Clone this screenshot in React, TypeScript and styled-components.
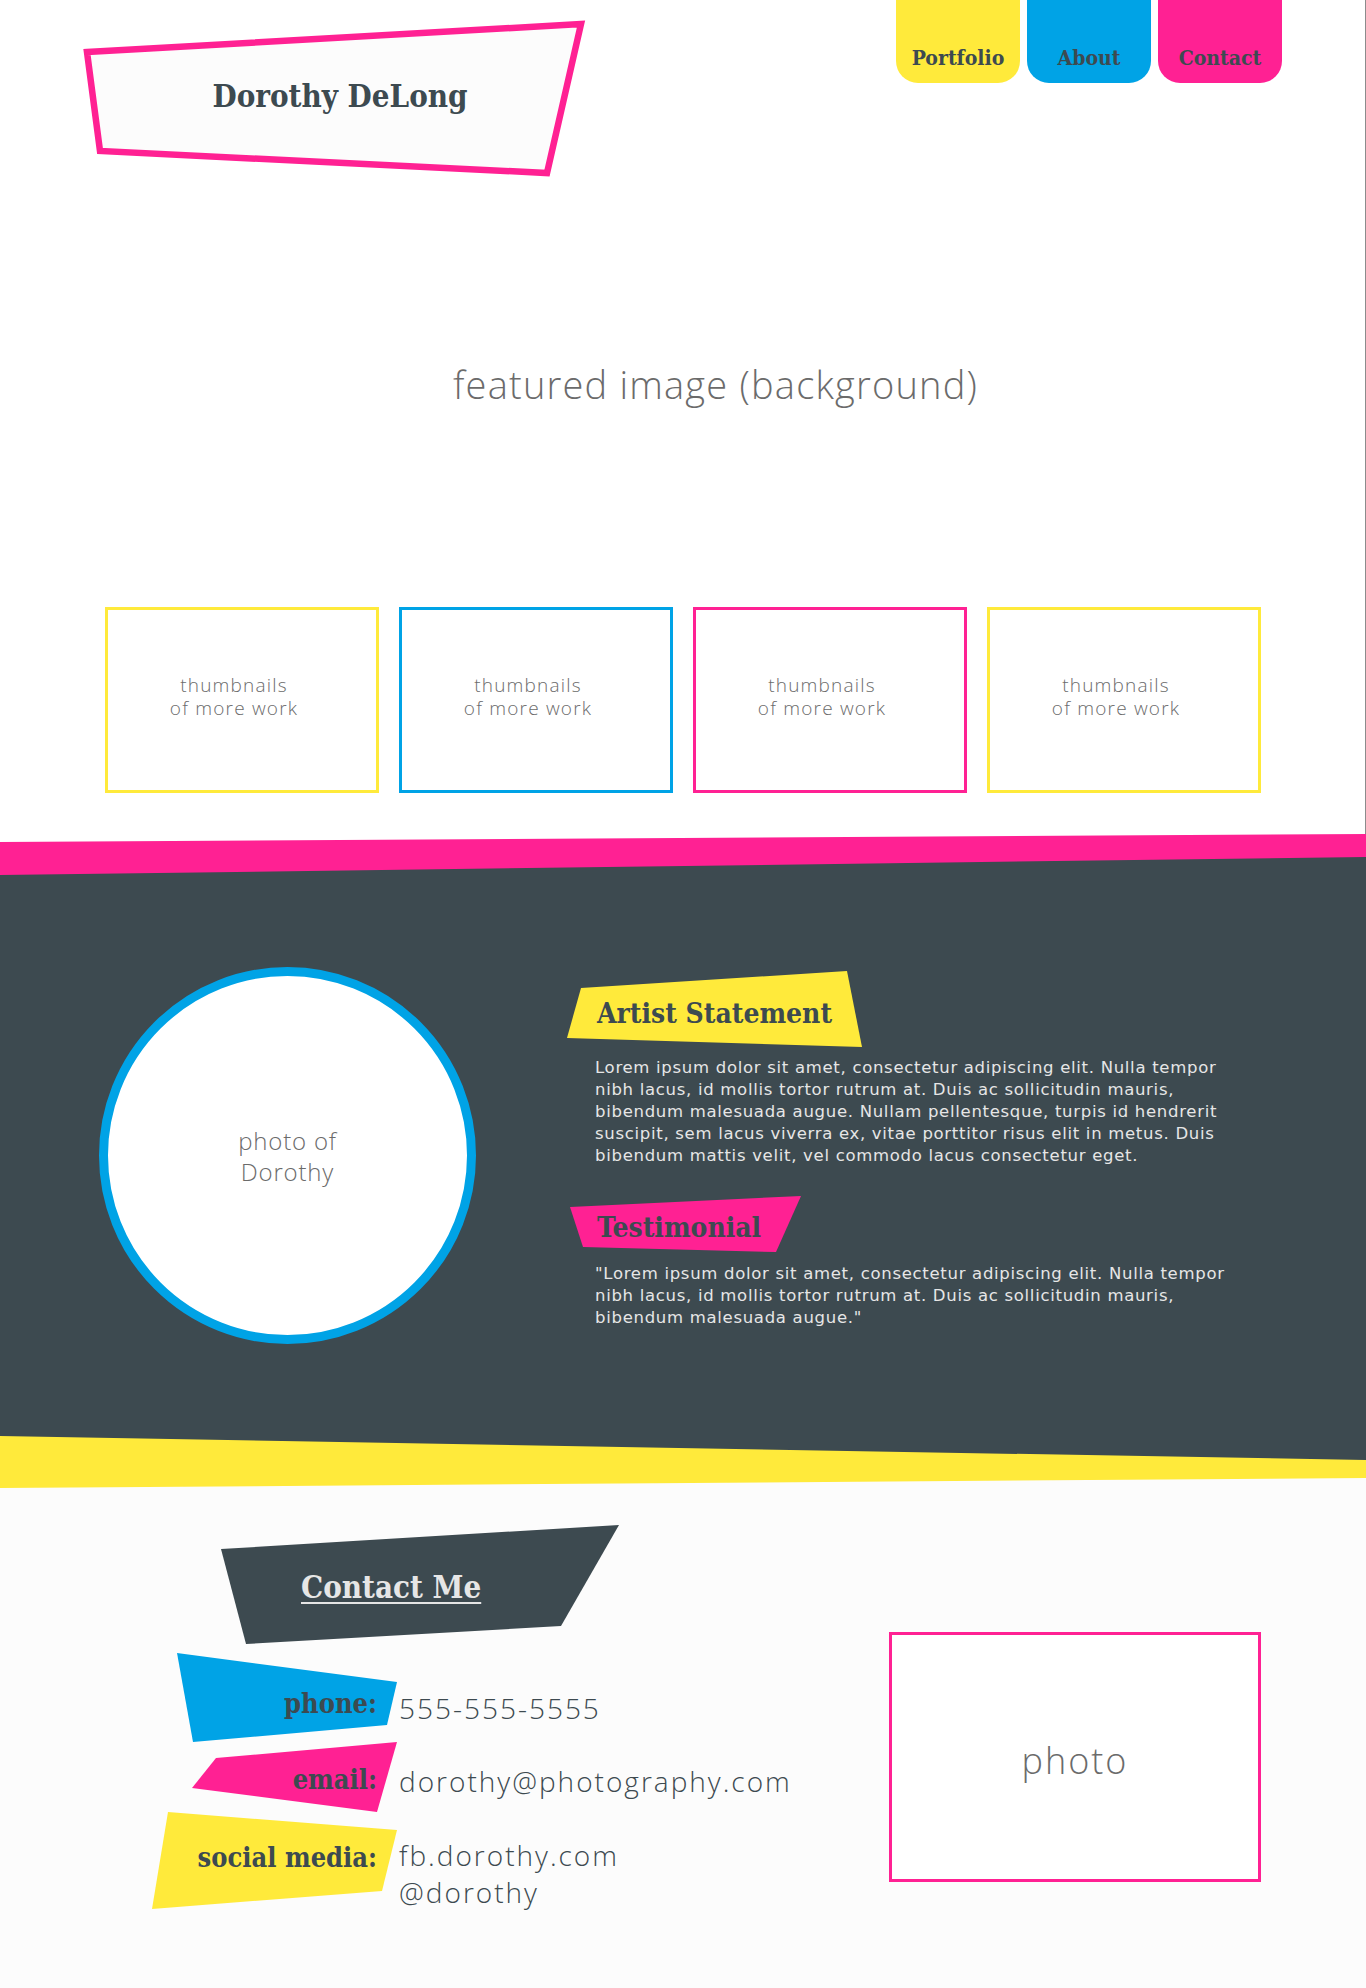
import React from "react";
import styled, { createGlobalStyle } from "styled-components";

const PINK = "#ff2193";
const YELLOW = "#ffea3b";
const BLUE = "#00a3e6";
const DARK = "#3d4a50";
const LIGHT = "#fcfcfc";
const GRAY = "#6b6b6b";

const SLAB = `"DejaVu Serif Condensed", "DejaVu Serif", serif`;
const SANS = `"Open Sans", "Noto Sans", sans-serif`;
const WIDE = `"DejaVu Sans", "Open Sans", sans-serif`;

const Global = createGlobalStyle`
  html, body { margin: 0; padding: 0; background: ${LIGHT}; }
  body { font-family: ${SANS}; }
  * { box-sizing: border-box; }
`;

const Page = styled.div`
  width: 1366px;
`;

/* ---------- top ---------- */
const Top = styled.header`
  background: #fff;
  height: 834px;
  border-right: 1px solid #8c8c8c;
  display: flex;
  flex-direction: column;
`;

const HeaderRow = styled.div`
  display: flex;
  justify-content: space-between;
  align-items: flex-start;
  height: 180px;
  padding: 0 83px 0 80px;
`;

const Logo = styled.div`
  position: relative;
  margin-top: 18px;
  width: 508px;
  height: 162px;
  display: flex;
  align-items: center;
  justify-content: center;
  padding: 0 0 6px 12px;
`;

const LogoShape = styled.svg`
  position: absolute;
  inset: 0;
`;

const LogoText = styled.h1`
  position: relative;
  margin: 0;
  font-family: ${SLAB};
  font-weight: 700;
  font-size: 31px;
  line-height: 1;
  color: ${DARK};
`;

const Nav = styled.nav`
  display: flex;
  gap: 7px;
`;

const Tab = styled.a<{ $bg: string }>`
  width: 124px;
  height: 83px;
  background: ${(p) => p.$bg};
  border-radius: 0 0 22px 22px;
  display: flex;
  align-items: flex-end;
  justify-content: center;
  padding-bottom: 15px;
  font-family: ${SLAB};
  font-weight: 700;
  font-size: 21px;
  line-height: 1;
  color: ${DARK};
  text-decoration: none;
`;

const Featured = styled.div`
  height: 408px;
  display: flex;
  align-items: center;
  justify-content: center;
  padding: 0 0 0 66px;
  font-family: ${SANS};
  font-weight: 300;
  font-size: 38px;
  letter-spacing: 1.2px;
  color: ${GRAY};
`;

const Thumbs = styled.div`
  display: flex;
  gap: 20px;
  margin-top: 19px;
  padding-left: 105px;
`;

const Thumb = styled.div<{ $color: string }>`
  width: 274px;
  height: 186px;
  border: 3px solid ${(p) => p.$color};
  display: flex;
  align-items: center;
  justify-content: center;
  padding: 0 16px 6px 0;
  text-align: center;
  font-family: ${SANS};
  font-weight: 300;
  font-size: 19px;
  letter-spacing: 1.2px;
  line-height: 23px;
  color: ${GRAY};
`;

/* ---------- dividers ---------- */
const Divider = styled.div<{
  $h: number;
  $band: string;
  $above: string;
  $below: string;
  $clipAbove: string;
  $clipBelow: string;
}>`
  position: relative;
  height: ${(p) => p.$h}px;
  background: ${(p) => p.$band};
  &::before,
  &::after {
    content: "";
    position: absolute;
    inset: 0;
  }
  &::before {
    background: ${(p) => p.$above};
    clip-path: ${(p) => p.$clipAbove};
  }
  &::after {
    background: ${(p) => p.$below};
    clip-path: ${(p) => p.$clipBelow};
  }
`;

/* ---------- about ---------- */
const About = styled.section`
  background: ${DARK};
  height: 561px;
  display: flex;
  align-items: flex-start;
  padding: 92px 0 0 99px;
`;

const Portrait = styled.div`
  width: 377px;
  height: 377px;
  flex: none;
  border-radius: 50%;
  border: 9px solid ${BLUE};
  background: #fff;
  display: flex;
  align-items: center;
  justify-content: center;
  text-align: center;
  font-family: ${SANS};
  font-weight: 300;
  font-size: 24px;
  letter-spacing: 0.8px;
  line-height: 31px;
  color: ${GRAY};
`;

const AboutCol = styled.div`
  margin-left: 91px;
  padding-top: 4px;
  display: flex;
  flex-direction: column;
  align-items: flex-start;
`;

const Tag = styled.h2<{
  $bg: string;
  $w: number;
  $h: number;
  $clip: string;
  $pl: number;
  $pt: number;
  $ml?: number;
  $mt?: number;
}>`
  margin: ${(p) => p.$mt || 0}px 0 0 ${(p) => p.$ml || 0}px;
  width: ${(p) => p.$w}px;
  height: ${(p) => p.$h}px;
  background: ${(p) => p.$bg};
  clip-path: ${(p) => p.$clip};
  padding: ${(p) => p.$pt}px 0 0 ${(p) => p.$pl}px;
  font-family: ${SLAB};
  font-weight: 700;
  font-size: 28px;
  line-height: 1;
  color: ${DARK};
  white-space: nowrap;
`;

const Para = styled.p<{ $mt: number }>`
  margin: ${(p) => p.$mt}px 0 0 28px;
  font-family: ${WIDE};
  font-weight: 400;
  font-size: 16.5px;
  letter-spacing: 0.7px;
  line-height: 22px;
  color: #e6e6e6;
  white-space: nowrap;
`;

/* ---------- contact ---------- */
const Contact = styled.section`
  background: ${LIGHT};
  display: flex;
  align-items: flex-start;
  padding: 37px 0 77px 151px;
`;

const ContactCol = styled.div`
  width: 738px;
  flex: none;
  display: flex;
  flex-direction: column;
`;

const ContactHeading = styled.h2`
  margin: 0 0 9px 70px;
  width: 398px;
  height: 119px;
  background: ${DARK};
  clip-path: polygon(0 24px, 398px 0, 340px 101px, 25px 119px);
  padding: 47px 0 0 80px;
  font-family: ${SLAB};
  font-weight: 700;
  font-size: 31px;
  line-height: 1;
  color: #e6e6e6;
  text-decoration: underline;
  text-decoration-thickness: 2px;
  text-underline-offset: 4px;
`;

const Row = styled.div`
  display: flex;
  align-items: flex-start;
`;

const LabelCell = styled.div`
  width: 246px;
  flex: none;
  display: flex;
  justify-content: flex-end;
`;

const Label = styled.div<{
  $bg: string;
  $w: number;
  $h: number;
  $clip: string;
  $pt: number;
}>`
  width: ${(p) => p.$w}px;
  height: ${(p) => p.$h}px;
  background: ${(p) => p.$bg};
  clip-path: ${(p) => p.$clip};
  padding: ${(p) => p.$pt}px 20px 0 0;
  text-align: right;
  font-family: ${SLAB};
  font-weight: 700;
  font-size: 27px;
  line-height: 1;
  color: ${DARK};
  white-space: nowrap;
`;

const Value = styled.div<{ $pt: number }>`
  margin-left: 2px;
  padding-top: ${(p) => p.$pt}px;
  font-family: ${SANS};
  font-weight: 300;
  font-size: 28px;
  letter-spacing: 2px;
  line-height: 37px;
  color: ${DARK};
  white-space: nowrap;
`;

const PhotoBox = styled.div`
  margin-top: 107px;
  width: 372px;
  height: 250px;
  border: 3px solid ${PINK};
  background: #fff;
  display: flex;
  align-items: center;
  justify-content: center;
  padding-top: 6px;
  font-family: ${SANS};
  font-weight: 300;
  font-size: 36px;
  letter-spacing: 2px;
  color: ${GRAY};
`;

const thumbColors = [YELLOW, BLUE, PINK, YELLOW];

export default function App() {
  return (
    <Page>
      <Global />
      <Top>
        <HeaderRow>
          <Logo>
            <LogoShape width="508" height="162" viewBox="0 0 508 162">
              <polygon
                points="7,34 501,6 467,155 20,133"
                fill="#fcfcfc"
                stroke={PINK}
                strokeWidth="6.5"
              />
            </LogoShape>
            <LogoText>Dorothy DeLong</LogoText>
          </Logo>
          <Nav>
            <Tab $bg={YELLOW} href="#">Portfolio</Tab>
            <Tab $bg={BLUE} href="#">About</Tab>
            <Tab $bg={PINK} href="#">Contact</Tab>
          </Nav>
        </HeaderRow>
        <Featured>featured image (background)</Featured>
        <Thumbs>
          {thumbColors.map((c, i) => (
            <Thumb key={i} $color={c}>
              thumbnails
              <br />
              of more work
            </Thumb>
          ))}
        </Thumbs>
      </Top>

      <Divider
        $h={41}
        $band={PINK}
        $above="#fff"
        $below={DARK}
        $clipAbove="polygon(0 0, 100% 0, 0 8px)"
        $clipBelow="polygon(0 41px, 100% 23px, 100% 100%, 0 100%)"
      />

      <About>
        <Portrait>
          photo of
          <br />
          Dorothy
        </Portrait>
        <AboutCol>
          <Tag
            $bg={YELLOW}
            $w={295}
            $h={76}
            $clip="polygon(14px 17px, 280px 0, 295px 76px, 0 67px)"
            $pl={30}
            $pt={29}
          >
            Artist Statement
          </Tag>
          <Para $mt={10}>
            Lorem ipsum dolor sit amet, consectetur adipiscing elit. Nulla tempor
            <br />
            nibh lacus, id mollis tortor rutrum at. Duis ac sollicitudin mauris,
            <br />
            bibendum malesuada augue. Nullam pellentesque, turpis id hendrerit
            <br />
            suscipit, sem lacus viverra ex, vitae porttitor risus elit in metus. Duis
            <br />
            bibendum mattis velit, vel commodo lacus consectetur eget.
          </Para>
          <Tag
            $bg={PINK}
            $w={231}
            $h={56}
            $clip="polygon(0 11px, 231px 0, 206px 56px, 13px 51px)"
            $pl={27}
            $pt={18}
            $ml={3}
            $mt={29}
          >
            Testimonial
          </Tag>
          <Para $mt={11}>
            "Lorem ipsum dolor sit amet, consectetur adipiscing elit. Nulla tempor
            <br />
            nibh lacus, id mollis tortor rutrum at. Duis ac sollicitudin mauris,
            <br />
            bibendum malesuada augue."
          </Para>
        </AboutCol>
      </About>

      <Divider
        $h={52}
        $band={YELLOW}
        $above={DARK}
        $below={LIGHT}
        $clipAbove="polygon(0 0, 100% 0, 100% 24px)"
        $clipBelow="polygon(100% 42px, 100% 100%, 0 100%)"
      />

      <Contact>
        <ContactCol>
          <ContactHeading>Contact Me</ContactHeading>
          <Row>
            <LabelCell>
              <Label
                $bg={BLUE}
                $w={220}
                $h={89}
                $clip="polygon(0 0, 220px 29px, 210px 72px, 16px 89px)"
                $pt={37}
              >
                phone:
              </Label>
            </LabelCell>
            <Value $pt={37}>555-555-5555</Value>
          </Row>
          <Row>
            <LabelCell>
              <Label
                $bg={PINK}
                $w={205}
                $h={70}
                $clip="polygon(24px 16px, 205px 0, 185px 70px, 0 46px)"
                $pt={24}
              >
                email:
              </Label>
            </LabelCell>
            <Value $pt={21}>dorothy@photography.com</Value>
          </Row>
          <Row>
            <LabelCell>
              <Label
                $bg={YELLOW}
                $w={245}
                $h={97}
                $clip="polygon(16px 0, 245px 18px, 230px 79px, 0 97px)"
                $pt={32}
              >
                social media:
              </Label>
            </LabelCell>
            <Value $pt={25}>
              fb.dorothy.com
              <br />
              @dorothy
            </Value>
          </Row>
        </ContactCol>
        <PhotoBox>photo</PhotoBox>
      </Contact>
    </Page>
  );
}
